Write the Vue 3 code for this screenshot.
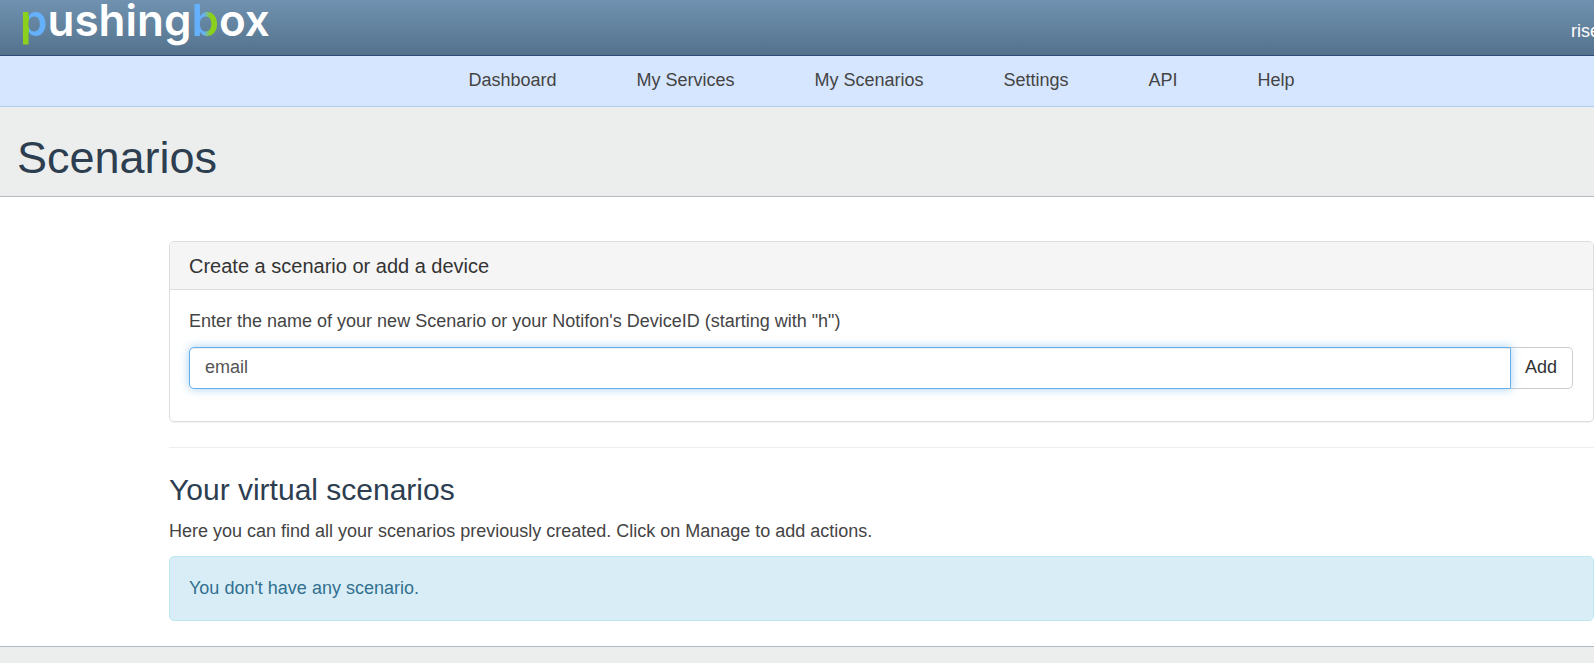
<script setup>
import { ref } from 'vue'

const links = ['Dashboard', 'My Services', 'My Scenarios', 'Settings', 'API', 'Help']
const name = ref('email')
</script>

<template>
  <div class="page">
    <header class="topbar">
      <a class="logo" href="#" aria-label="pushingbox"><span class="p">p</span>ushing<span class="b">b</span>ox</a>
      <a class="user" href="#">rise</a>
    </header>
    <nav class="menu">
      <a v-for="link in links" :key="link" href="#">{{ link }}</a>
    </nav>
    <div class="title">
      <h1>Scenarios</h1>
    </div>
    <main class="content">
      <section class="panel">
        <h3>Create a scenario or add a device</h3>
        <form class="panel-body" @submit.prevent>
          <label for="scenario">Enter the name of your new Scenario or your Notifon's DeviceID (starting with "h")</label>
          <div class="group">
            <input id="scenario" v-model="name" type="text" autocomplete="off" />
            <button type="submit">Add</button>
          </div>
        </form>
      </section>
      <hr />
      <h2>Your virtual scenarios</h2>
      <p>Here you can find all your scenarios previously created. Click on Manage to add actions.</p>
      <div class="alert">You don't have any scenario.</div>
    </main>
    <footer class="foot"></footer>
  </div>
</template>

<style>
html,
body {
  background: #eceeed;
}
body {
  margin: 0;
}
</style>

<style scoped>
* {
  box-sizing: border-box;
}
.page {
  overflow: hidden;
  font: 18px/26px "Liberation Sans", Arial, sans-serif;
  color: #444;
}
a {
  color: inherit;
  text-decoration: none;
}
.topbar {
  display: flex;
  justify-content: space-between;
  height: 56px;
  padding-left: 20px;
  background: linear-gradient(#7092b0, #54728c);
  border-bottom: 1px solid #2f4a78;
}
.logo {
  font: 600 44px/40px Inter, sans-serif;
  color: #fff;
}
.p,
.b {
  color: transparent;
  -webkit-background-clip: text;
  background-clip: text;
}
.p {
  background-image: linear-gradient(90deg, #8bd01c 32%, #64b0fa 32%);
}
.b {
  background-image: linear-gradient(90deg, #64b0fa 45%, #8bd01c 70%);
}
.user {
  margin: 18px -6px 0 0;
  color: #fff;
}
.menu {
  display: flex;
  justify-content: center;
  gap: 80px;
  height: 51px;
  padding: 11px 0 0 169px;
  background: #d6e6ff;
  border-bottom: 1px solid #b0cfec;
}
.title {
  padding: 25px 17px 12px;
  background: #eceeed;
  border-bottom: 1px solid #b4bbc1;
}
h1,
h2,
h3,
p {
  margin: 0;
  font-weight: 400;
}
h1 {
  font-size: 45px;
  line-height: 52px;
  color: #2c3e50;
}
.content {
  padding: 44px 0 25px 169px;
  background: #fff;
}
.panel {
  border: 1px solid #ddd;
  border-radius: 5px;
  box-shadow: 0 1px 1px rgba(0, 0, 0, 0.05);
}
h3 {
  padding: 12px 19px 11px;
  font-size: 20px;
  line-height: 24px;
  color: #333;
  background: #f5f5f5;
  border-bottom: 1px solid #ddd;
  border-radius: 4px 4px 0 0;
}
.panel-body {
  padding: 18px 20px 32px 19px;
}
label {
  display: block;
  margin-bottom: 13px;
}
.group {
  display: flex;
}
input {
  flex: 1;
  min-width: 0;
  height: 42px;
  padding: 0 15px 2px;
  font: inherit;
  color: #555;
  background: #fff;
  border: 1px solid #66afe9;
  border-radius: 5px 0 0 5px;
  box-shadow: inset 0 1px 1px rgba(0, 0, 0, 0.075), 0 0 10px rgba(102, 175, 233, 0.6);
  outline: none;
  position: relative;
}
button {
  height: 42px;
  padding: 0 15px 2px 14px;
  font: inherit;
  color: #333;
  background: #fff;
  border: 1px solid #ccc;
  border-left: 0;
  border-radius: 0 5px 5px 0;
}
hr {
  margin: 25px 0;
  border: 0;
  border-top: 1px solid #eee;
}
h2 {
  margin-bottom: 12px;
  font-size: 30px;
  line-height: 33px;
  color: #2c3e50;
}
p {
  margin-bottom: 12px;
}
.alert {
  padding: 18px 19px;
  min-height: 65px;
  color: #31708f;
  background: #d9edf7;
  border: 1px solid #bce8f1;
  border-radius: 5px;
}
.foot {
  height: 17px;
  background: #eceeed;
  border-top: 1px solid #b4bbc1;
}
</style>
